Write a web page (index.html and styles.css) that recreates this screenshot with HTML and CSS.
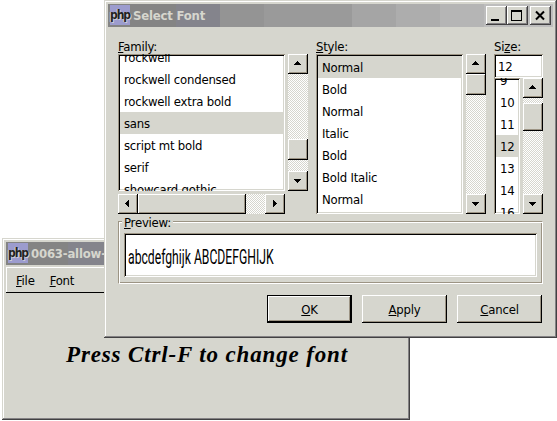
FILE: index.html
```html
<!DOCTYPE html>
<html lang="en">
<head>
<meta charset="utf-8">
<title>Select Font</title>
<link rel="stylesheet" href="styles.css">
</head>
<body>
<section class="window main">
  <header class="titlebar main-title"><span class="php">php</span><span class="caption">0063-allow-font</span></header>
  <nav class="menubar"><span><u>F</u>ile</span><span><u>F</u>ont</span></nav>
  <div class="message"><span>Press Ctrl-F to change font</span></div>
</section>

<section class="window dialog">
  <header class="titlebar dialog-title">
    <span class="php">php</span><span class="caption">Select Font</span>
    <span class="controls">
      <button class="ctl"><svg width="21" height="19" shape-rendering="crispEdges"><path d="M5 13h8v2H5z"/></svg></button>
      <button class="ctl"><svg width="21" height="19" shape-rendering="crispEdges"><path fill-rule="evenodd" d="M4 4h11v11H4zM5 6v8h9V6z"/></svg></button>
      <button class="ctl close"><svg width="21" height="19"><path d="M6 5.5l8 8M14 5.5l-8 8" stroke="#000" stroke-width="2"/></svg></button>
    </span>
  </header>
  <div class="body">
    <div class="pickers">
      <div class="picker">
        <label class="label"><u>F</u>amily:</label>
        <div class="family-grid">
          <ul class="sunken list family"><li>rockwell</li><li>rockwell condensed</li><li>rockwell extra bold</li><li class="sel">sans</li><li>script mt bold</li><li>serif</li><li>showcard gothic</li></ul>
          <div class="vscroll">
            <i class="raised btn"><svg width="20" height="20" shape-rendering="crispEdges"><path d="M9 7h1v1h1v1h1v1h1v1H6v-1h1V9h1V8h1z"/></svg></i>
            <i class="raised thumb family-thumb"></i>
            <i class="raised btn"><svg width="20" height="20" shape-rendering="crispEdges"><path d="M6 8h7v1h-1v1h-1v1h-1v1H9v-1H8v-1H7V9H6z"/></svg></i>
          </div>
          <div class="hscroll">
            <i class="raised btn"><svg width="20" height="20" shape-rendering="crispEdges"><path d="M11 6v7h-1v-1H9v-1H8v-1H7V9h1V8h1V7h1V6z"/></svg></i>
            <i class="raised hthumb"></i>
            <i class="raised btn last"><svg width="20" height="20" shape-rendering="crispEdges"><path d="M8 6v7h1v-1h1v-1h1v-1h1V9h-1V8h-1V7H9V6z"/></svg></i>
          </div>
        </div>
      </div>
      <div class="picker style-picker">
        <label class="label"><u>S</u>tyle:</label>
        <div class="row">
          <ul class="sunken list style"><li class="sel">Normal</li><li>Bold</li><li>Normal</li><li>Italic</li><li>Bold</li><li>Bold Italic</li><li>Normal</li></ul>
          <div class="vscroll">
            <i class="raised btn"><svg width="20" height="20" shape-rendering="crispEdges"><path d="M9 7h1v1h1v1h1v1h1v1H6v-1h1V9h1V8h1z"/></svg></i>
            <i class="raised thumb style-thumb"></i>
            <i class="raised btn"><svg width="20" height="20" shape-rendering="crispEdges"><path d="M6 8h7v1h-1v1h-1v1h-1v1H9v-1H8v-1H7V9H6z"/></svg></i>
          </div>
        </div>
      </div>
      <div class="picker size-picker">
        <label class="label">Si<u>z</u>e:</label>
        <div class="sunken size-entry">12</div>
        <div class="row">
          <ul class="sunken list size"><li>9</li><li>10</li><li>11</li><li class="sel">12</li><li>13</li><li>14</li><li>16</li></ul>
          <div class="vscroll">
            <i class="raised btn"><svg width="20" height="20" shape-rendering="crispEdges"><path d="M9 7h1v1h1v1h1v1h1v1H6v-1h1V9h1V8h1z"/></svg></i>
            <i class="raised thumb size-thumb"></i>
            <i class="raised btn"><svg width="20" height="20" shape-rendering="crispEdges"><path d="M6 8h7v1h-1v1h-1v1h-1v1H9v-1H8v-1H7V9H6z"/></svg></i>
          </div>
        </div>
      </div>
    </div>
    <div class="preview">
      <div class="legend"><span><u>P</u>review:</span></div>
      <div class="sunken preview-entry"><span>abcdefghijk ABCDEFGHIJK</span></div>
    </div>
    <div class="actions">
      <button class="action default"><span><u>O</u>K</span></button>
      <button class="action"><span><u>A</u>pply</span></button>
      <button class="action"><span><u>C</u>ancel</span></button>
    </div>
  </div>
</section>
</body>
</html>
```
FILE: styles.css
```css
* { box-sizing: border-box; }

body {
  margin: 0;
  width: 557px;
  height: 421px;
  overflow: hidden;
  position: relative;
  background: #fff;
  color: #000;
  font: 13px/22px "DejaVu Sans Condensed", "DejaVu Sans", sans-serif;
  font-stretch: condensed;
  letter-spacing: -0.22px;
  white-space: nowrap;
}

u {
  text-decoration: underline;
  text-decoration-thickness: 1px;
  text-underline-offset: 1px;
  text-decoration-skip-ink: none;
}

ul { margin: 0; padding: 0; list-style: none; }
svg { display: block; }
button { font: inherit; color: inherit; letter-spacing: inherit; padding: 0; margin: 0; }

.window {
  position: absolute;
  background: #d6d6ce;
  padding: 4px;
  box-shadow: inset -1px -1px #424142, inset 1px 1px #d6d6ce, inset -2px -2px #848284, inset 2px 2px #fff;
}
.main { left: 2px; top: 238px; width: 408px; height: 182px; }
.dialog { left: 104px; top: 0; width: 453px; height: 338px; }

.titlebar {
  height: 23px;
  display: flex;
  align-items: flex-start;
  padding: 1px 2px 0 2px;
  color: #d6d6ce;
  font-weight: bold;
  font-size: 13px;
}
.main-title { background: linear-gradient(90deg, #848484 62px, #84848c 62px); }
.dialog-title {
  background: linear-gradient(90deg, #848484 68px, #84848c 68px 112px, #949494 112px 156px, #9a9a9a 156px 244px, #a5a5a5 244px 288px, #adadad 288px 332px, #b5b5b5 332px 376px, #bdbdbd 376px);
}

.php {
  width: 20px;
  height: 20px;
  background: #9c9cce;
  color: #222;
  font: bold 12px/20px "DejaVu Sans Condensed", "DejaVu Sans", sans-serif;
  letter-spacing: -1.1px;
  text-align: center;
  text-shadow: 1px 1px #ceced6, -1px 0 #ceced6;
}
.caption { margin-left: 3px; line-height: 21px; letter-spacing: -0.2px; }
.controls { margin: 1px 0 0 auto; display: flex; }
.ctl, .raised {
  background: #d6d6ce;
  border: 0;
  box-shadow: inset -1px -1px #000, inset 1px 1px #fff, inset -2px -2px #9c9484;
}
.ctl { width: 21px; height: 19px; box-shadow: inset -1px -1px #424142, inset 1px 1px #fff, inset -2px -2px #848284; }
.ctl.close { margin-left: 2px; }

.menubar {
  margin-top: 2px;
  height: 26px;
  border-bottom: 1px solid #000;
  box-shadow: inset 1px 1px #fff;
  padding: 3px 0 0 10px;
  display: flex;
  gap: 15px;
}
.message {
  display: flex;
  justify-content: center;
  margin-top: 47px;
  padding-left: 2px;
  font: italic bold 23px/30px "Liberation Serif", serif;
  letter-spacing: 0.85px;
}

.body { padding: 8px 9px 0 10px; }
.pickers { display: flex; }
.label { display: block; height: 19px; line-height: 23px; }
.style-picker { margin-left: 8px; }
.size-picker { margin-left: 8px; }
.row { display: flex; gap: 3px; }
.family-grid { display: grid; grid-template: 137px 20px / 167px 20px; gap: 3px; }

.sunken {
  background: #fff;
  padding: 2px;
  box-shadow: inset 1px 1px #9c9484, inset -1px -1px #fff, inset 2px 2px #000, inset -2px -2px #d6d6ce;
}
.list { overflow: hidden; }
.list li { height: 22px; padding-left: 4px; line-height: 23px; }
.list .sel { background: #d6d6ce; }
.family { height: 137px; }
.family, .style, .size { clip-path: inset(0); }
.family li:first-child { margin-top: -10px; }
.style { width: 147px; height: 160px; }
.size { width: 26px; height: 136px; }
.size li:first-child { margin-top: -11px; }
.size-entry { width: 49px; height: 24px; padding-left: 4px; line-height: 21px; }

.vscroll, .hscroll {
  display: flex;
  background: repeating-conic-gradient(#fff 0 25%, #d6d6ce 0 50%) 0 0 / 2px 2px;
}
.vscroll { flex-direction: column; width: 20px; }
.btn { width: 20px; height: 20px; flex: none; }
.vscroll .btn:last-child { margin-top: auto; }
.thumb { height: 21px; flex: none; }
.family-thumb { margin-top: 65px; }
.size-thumb { margin-top: 5px; height: 28px; }
.hscroll { width: 167px; }
.hthumb { width: 108px; }
.hscroll .last { margin-left: auto; }

.preview {
  margin-top: 7px;
  width: 425px;
  height: 63px;
  border: 1px solid #9c9484;
  border-right-color: #fff;
  border-bottom-color: #fff;
  box-shadow: inset 1px 1px #fff, inset -1px -1px #9c9484;
  padding: 0 5px;
}
.legend { height: 12px; margin-top: -1px; }
.legend span { display: inline-block; height: 3px; line-height: 4px; vertical-align: top; background: #d6d6ce; padding: 0 2px; margin-left: -2px; }
.preview-entry { height: 44px; padding: 11px 4px; }
.preview-entry span {
  display: inline-block;
  font: 400 21px/26px Roboto, sans-serif;
  letter-spacing: 0;
  transform: scaleX(0.58);
  transform-origin: 0 0;
}

.actions { display: flex; justify-content: flex-end; gap: 10px; margin: 11px 2px 0 0; }
.action {
  width: 85px;
  height: 28px;
  background: #d6d6ce;
  border: 0;
  box-shadow: inset -1px -1px #000, inset 1px 1px #fff, inset -2px -2px #9c9484;
}
.default { box-shadow: inset 0 0 0 1px #000, inset -2px -2px #000, inset 2px 2px #fff, inset -3px -3px #9c9484; }
.action span { position: relative; top: 1px; }
```
